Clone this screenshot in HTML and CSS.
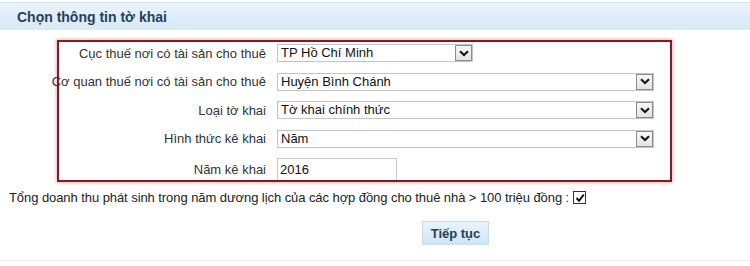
FILE: index.html
```html
<!DOCTYPE html>
<html lang="vi">
<head>
<meta charset="utf-8">
<title>Chọn thông tin tờ khai</title>
<link rel="stylesheet" href="styles.css">
</head>
<body>
<div class="page">
  <div class="header"><span class="title">Chọn thông tin tờ khai</span></div>
  <div class="box">
    <div class="label">Cục thuế nơi có tài sản cho thuê</div>
    <div class="control"><div class="select short"><span class="value">TP Hồ Chí Minh</span><span class="arrow"><svg width="10" height="7" viewBox="0 0 10 7"><path d="M1 1.2 L5 5 L9 1.2" fill="none" stroke="#111" stroke-width="2"/></svg></span></div></div>

    <div class="label">Cơ quan thuế nơi có tài sản cho thuê</div>
    <div class="control"><div class="select long"><span class="value">Huyện Bình Chánh</span><span class="arrow"><svg width="10" height="7" viewBox="0 0 10 7"><path d="M1 1.2 L5 5 L9 1.2" fill="none" stroke="#111" stroke-width="2"/></svg></span></div></div>

    <div class="label">Loại tờ khai</div>
    <div class="control"><div class="select long"><span class="value">Tờ khai chính thức</span><span class="arrow"><svg width="10" height="7" viewBox="0 0 10 7"><path d="M1 1.2 L5 5 L9 1.2" fill="none" stroke="#111" stroke-width="2"/></svg></span></div></div>

    <div class="label">Hình thức kê khai</div>
    <div class="control"><div class="select long"><span class="value">Năm</span><span class="arrow"><svg width="10" height="7" viewBox="0 0 10 7"><path d="M1 1.2 L5 5 L9 1.2" fill="none" stroke="#111" stroke-width="2"/></svg></span></div></div>

    <div class="label tall">Năm kê khai</div>
    <div class="control tall"><div class="input">2016</div></div>
  </div>
  <div class="revenue">
    <span class="revenue-text">Tổng doanh thu phát sinh trong năm dương lịch của các hợp đồng cho thuê nhà &gt; 100 triệu đồng :</span>
    <span class="checkbox"><svg width="10" height="10" viewBox="0 0 10 10"><path d="M1.5 5 L4 7.8 L8.8 1.6" fill="none" stroke="#111" stroke-width="2"/></svg></span>
  </div>
  <div class="actions"><button class="btn" type="button">Tiếp tục</button></div>
  <div class="footer"></div>
</div>
</body>
</html>
```
FILE: styles.css
```css
html, body {
  margin: 0;
  padding: 0;
  background: #ffffff;
}
.page {
  font-family: Arial, "Liberation Sans", sans-serif;
  font-size: 13px;
  color: #2a2a2a;
  width: 750px;
  height: 266px;
  overflow: hidden;
}
.header {
  margin-top: 2px;
  height: 27px;
  border-top: 1px solid #d3e3f0;
  background: linear-gradient(#ebf3fb, #d6e8f7);
  display: flex;
  align-items: center;
  padding-left: 17px;
}
.title {
  font-weight: bold;
  font-size: 14px;
  color: #24415a;
}
.box {
  margin: 10px 0 0 57px;
  width: 611px;
  height: 136px;
  padding-top: 2px;
  border: 2px solid #74222a;
  box-shadow: 0 0 3px 1px rgba(205, 90, 100, 0.45), inset 0 0 2px rgba(205, 90, 100, 0.35);
  display: grid;
  grid-template-columns: 207px 1fr;
  grid-auto-rows: 18px;
  column-gap: 11px;
  row-gap: 10.5px;
  align-content: start;
}
.label {
  display: flex;
  align-items: center;
  justify-content: flex-end;
  white-space: nowrap;
  color: #333;
}
.label.tall, .control.tall {
  height: 22px;
}
.control {
  display: flex;
  align-items: center;
}
.select {
  box-sizing: border-box;
  height: 18px;
  border: 1px solid #c4c4c4;
  background: #fff;
  display: flex;
  align-items: center;
  justify-content: space-between;
  color: #111;
}
.select.short { width: 196px; }
.select.long { width: 377px; }
.value {
  padding-left: 3px;
  line-height: 16px;
}
.arrow {
  box-sizing: border-box;
  width: 17px;
  height: 16px;
  border: 1px solid #8c8c8c;
  background: linear-gradient(#f6f6f6, #e4e4e4);
  display: flex;
  align-items: center;
  justify-content: center;
}
.input {
  box-sizing: border-box;
  width: 120px;
  height: 22px;
  border: 1px solid #c8c8c8;
  border-bottom: none;
  padding: 3px 0 0 2px;
  color: #111;
}
.revenue {
  margin-top: 8px;
  padding-left: 9px;
  height: 15px;
  display: flex;
  align-items: center;
  gap: 4px;
  white-space: nowrap;
  color: #222;
}
.revenue-text {
  letter-spacing: -0.07px;
}
.checkbox {
  box-sizing: border-box;
  width: 13px;
  height: 13px;
  border: 1px solid #333;
  background: #fff;
  display: flex;
  align-items: center;
  justify-content: center;
}
.actions {
  margin-top: 16px;
  padding-left: 422px;
  display: flex;
}
.btn {
  box-sizing: border-box;
  width: 67px;
  height: 24px;
  border: 1px solid #c9dcea;
  background: linear-gradient(#e9f3fb, #d2e4f3);
  font-family: Arial, "Liberation Sans", sans-serif;
  font-size: 13px;
  font-weight: bold;
  color: #223f58;
  padding: 0;
}
.footer {
  margin-top: 15px;
  height: 1px;
  background: #ececec;
}
```
